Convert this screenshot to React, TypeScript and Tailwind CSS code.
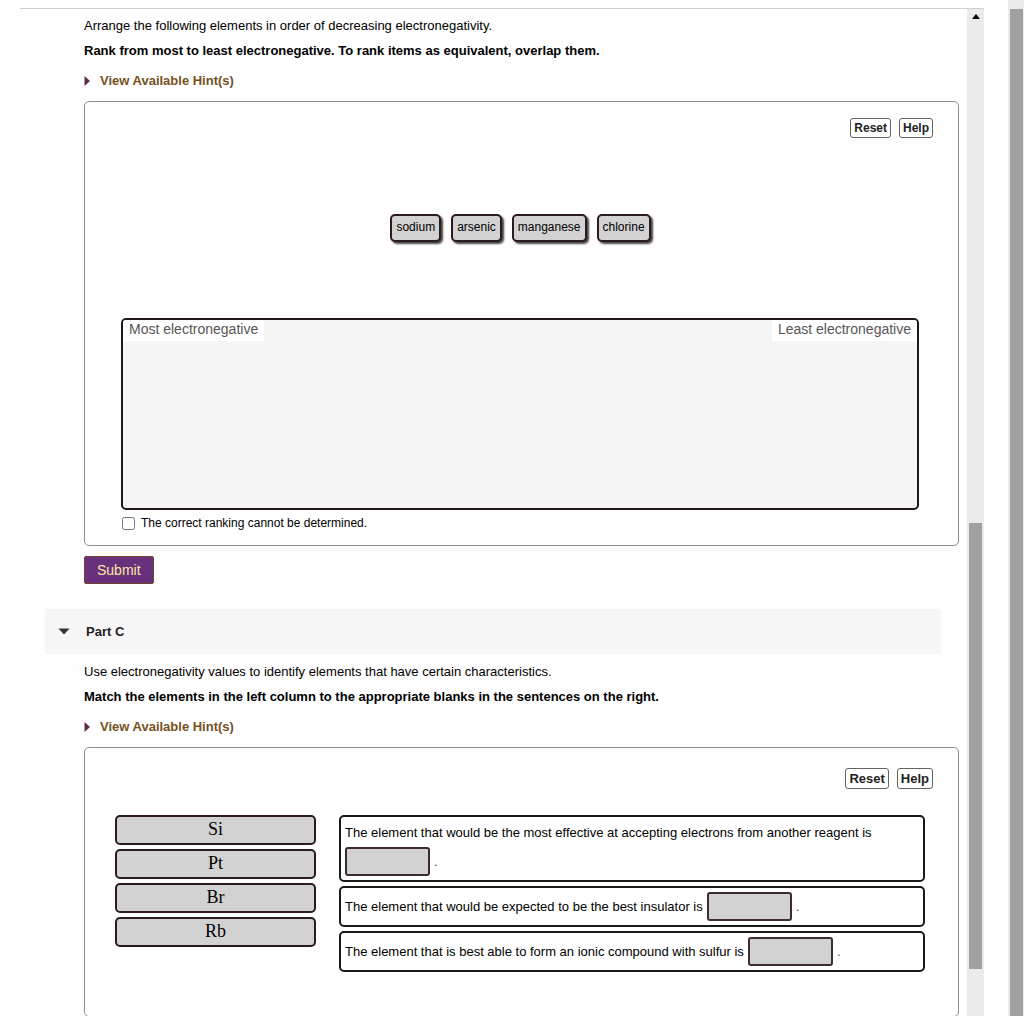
import { useState, type ReactNode } from "react";
import { clsx } from "clsx";

const RANK_ITEMS = ["sodium", "arsenic", "manganese", "chlorine"];

const ELEMENTS = ["Si", "Pt", "Br", "Rb"];

const SENTENCES = [
  {
    text: "The element that would be the most effective at accepting electrons from another reagent is",
    wrap: true,
  },
  { text: "The element that would be expected to be the best insulator is", wrap: false },
  { text: "The element that is best able to form an ionic compound with sulfur is", wrap: false },
];

export default function App() {
  return (
    <div className="flex h-screen overflow-hidden bg-[#fefefe] font-['Liberation_Sans',Arial,sans-serif] text-[13px] text-black">
      <div className="mt-2 ml-5 flex min-w-0 flex-1 border-t border-[#cfcfcf]">
        <main className="min-w-0 flex-1 pr-2">
          <section className="pt-[7px] pl-16">
            <Prompt
              text="Arrange the following elements in order of decreasing electronegativity."
              instruction="Rank from most to least electronegative. To rank items as equivalent, overlap them."
            />
            <RankingPanel />
            <button className="mt-[10px] block h-7 rounded-xs border border-[#74432f] bg-[#67317c] px-3 text-sm text-[#fbe9a6]">
              Submit
            </button>
          </section>

          <section className="mt-[25px]">
            <h2 className="mr-[18px] ml-[25px] bg-[#f6f6f6]">
              <button className="flex h-[45px] w-full items-center gap-4 px-[13px] font-bold text-[#222]" aria-expanded="true">
                <svg className="h-[7px] w-3" viewBox="0 0 12 7" aria-hidden="true">
                  <path d="M0.5 0.5h11L6 6.5z" fill="#333" />
                </svg>
                Part C
              </button>
            </h2>
            <div className="pt-2 pl-16">
              <Prompt
                text="Use electronegativity values to identify elements that have certain characteristics."
                instruction="Match the elements in the left column to the appropriate blanks in the sentences on the right."
              />
              <MatchingPanel />
            </div>
          </section>
        </main>

        {/* Inner scrollbar */}
        <div className="flex w-[17px] flex-col bg-[#ebebeb] px-[2px]" aria-hidden="true">
          <div className="flex flex-[510] justify-center pt-[5px]">
            <svg className="h-[5px] w-2" viewBox="0 0 8 5">
              <path d="M4 0l4 5H0z" fill="#000" />
            </svg>
          </div>
          <div className="flex-[446] bg-[#a0a0a0]" />
          <div className="flex-[47]" />
        </div>
      </div>

      {/* Window scrollbar */}
      <div className="ml-6 flex w-4 flex-col bg-[#ebebeb] pt-[9px] pr-px pl-[2px]" aria-hidden="true">
        <div className="flex-1 bg-[#a0a0a0]" />
      </div>
    </div>
  );
}

function Prompt({ text, instruction }: { text: string; instruction: string }) {
  return (
    <div className="leading-5">
      <p>{text}</p>
      <p className="mt-[5px] font-bold">{instruction}</p>
      <a href="#hints" className="mt-[10px] flex items-center gap-[10px] font-bold text-[#76521f]">
        <svg className="h-[10px] w-[6px]" viewBox="0 0 6 10" aria-hidden="true">
          <path d="M0.5 0L6 5L0.5 10z" fill="#5f2c4c" />
        </svg>
        View Available Hint(s)
      </a>
    </div>
  );
}

function Panel({ children }: { children: ReactNode }) {
  return <div className="mt-[10px] rounded-[5px] border border-[#8d8d8d] bg-[#fefefe]">{children}</div>;
}

function Toolbar({ large = false }: { large?: boolean }) {
  const button = clsx(
    "rounded-[3px] border border-[#66635a] bg-white px-[3px] font-bold text-[#222]",
    large ? "h-[21px] text-[13px]" : "h-5 text-xs"
  );

  return (
    <div className={clsx("flex justify-end gap-2 pr-[25px]", large ? "pt-5" : "pt-4")}>
      <button className={button}>Reset</button>
      <button className={button}>Help</button>
    </div>
  );
}

function RankingPanel() {
  const [undetermined, setUndetermined] = useState(false);

  return (
    <Panel>
      <Toolbar />
      <div className="mt-[76px] flex justify-center gap-[10px] pr-[2px]">
        {RANK_ITEMS.map((item) => (
          <button
            key={item}
            className="h-7 rounded-[5px] border-2 border-[#2b1b1e] bg-[#d2d2d2] px-1 pb-[3px] text-xs shadow-[2px_2px_2px_#444]"
          >
            {item}
          </button>
        ))}
      </div>
      <div className="pr-[39px] pl-9">
        <div className="mt-[76px] flex h-48 items-start justify-between rounded-[5px] border-2 border-[#21171a] bg-[#f5f5f5] text-sm text-[#555]">
          <span className="rounded-tl-[3px] bg-white px-[6px] pb-[3px] leading-[18px]">Most electronegative</span>
          <span className="rounded-tr-[3px] bg-white px-[6px] pb-[3px] leading-[18px]">Least electronegative</span>
        </div>
        <label className="flex items-center gap-[6px] pt-[3px] pb-3 pl-px text-xs leading-5">
          <input
            type="checkbox"
            checked={undetermined}
            onChange={() => setUndetermined(!undetermined)}
            className="size-[13px]"
          />
          The correct ranking cannot be determined.
        </label>
      </div>
    </Panel>
  );
}

function MatchingPanel() {
  return (
    <Panel>
      <Toolbar large />
      <div className="grid grid-cols-[201px_minmax(0,1fr)] items-start gap-[23px] pt-[26px] pr-[33px] pb-11 pl-[30px]">
        <div className="flex flex-col gap-1">
          {ELEMENTS.map((symbol) => (
            <button
              key={symbol}
              className="h-[30px] rounded-[5px] border-2 border-[#2b1b1e] bg-[#d2d2d2] pb-[2px] font-['Liberation_Serif',serif] text-lg leading-6"
            >
              {symbol}
            </button>
          ))}
        </div>
        <div className="flex flex-col gap-1">
          {SENTENCES.map(({ text, wrap }) => (
            <div
              key={text}
              className={clsx(
                "flex flex-wrap items-center gap-x-1 rounded-[5px] border-2 border-[#181a16] bg-white px-1 text-[13px]",
                wrap ? "pt-[6px] pb-1" : "py-1"
              )}
            >
              <span className={clsx("leading-5", wrap && "mb-1 w-full")}>{text}</span>
              <button
                className="h-[29px] w-[85px] rounded-[3px] border-2 border-[#3d2c30] bg-[#d2d2d2]"
                aria-label="Blank"
              />
              <span className="text-[#444]">.</span>
            </div>
          ))}
        </div>
      </div>
    </Panel>
  );
}
